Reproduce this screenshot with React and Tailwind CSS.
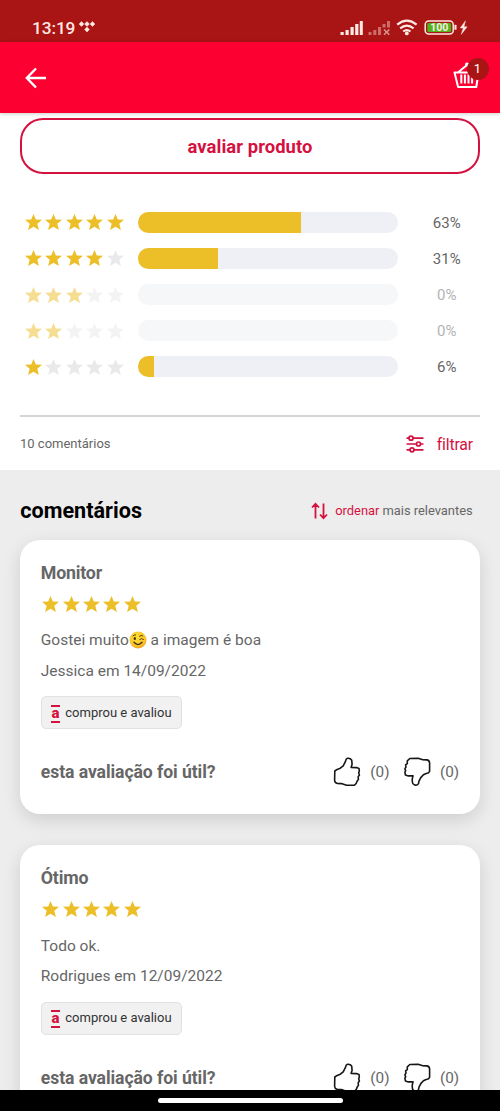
import React from "react";

const STAR = "M8.5 0 L10.8 5.5 L17 5.8 L12.3 9.8 L13.9 16 L8.5 12.7 L3.1 16 L4.7 9.8 L0 5.8 L6.2 5.5 Z";

function Stars({ count }) {
  return (
    <div className="flex gap-[3.4px]">
      {[0, 1, 2, 3, 4].map((i) => (
        <svg key={i} width="17" height="16" viewBox="0 0 17 16" className="block shrink-0">
          <path d={STAR} fill={i < count ? "#ecbe27" : "#e9e9eb"} />
        </svg>
      ))}
    </div>
  );
}

function RatingRow({ stars, percent }) {
  return (
    <div className={percent === 0 ? "flex h-[36.1px] items-center opacity-50" : "flex h-[36.1px] items-center"}>
      <div className="w-[113px] shrink-0">
        <Stars count={stars} />
      </div>
      <div className="h-[20.5px] w-[259.5px] shrink-0 overflow-hidden rounded-full bg-[#eff0f5]">
        <div className="h-full bg-[#ecbe27]" style={{ width: `${percent}%` }} />
      </div>
      <div className="ml-4 w-[69px] pt-[2px] text-center text-[15px] text-[#666]">{percent}%</div>
    </div>
  );
}

function Wink() {
  return (
    <svg width="18" height="18" viewBox="0 0 18 18" className="inline-block align-[-4px]">
      <defs>
        <radialGradient id="face" cx=".45" cy=".35" r=".65">
          <stop offset="0" stopColor="#fde030" />
          <stop offset=".75" stopColor="#f9c52c" />
          <stop offset="1" stopColor="#eda01f" />
        </radialGradient>
      </defs>
      <circle cx="9" cy="9" r="8.5" fill="url(#face)" />
      <ellipse cx="5.8" cy="7.6" rx="1.1" ry="1.5" fill="#422b0d" />
      <path d="M10.7 8.4 Q12.5 6.6 14.5 8.4 M10.5 5.2 Q12.3 3.8 13.8 4.8 M4 4.8 Q5 3.6 6.6 3.9" fill="none" stroke="#5a3a10" strokeWidth="1" strokeLinecap="round" />
      <path d="M5 11.3 Q9 15.8 13 11.3" fill="none" stroke="#422b0d" strokeWidth="1.3" strokeLinecap="round" />
    </svg>
  );
}

const THUMB_STROKE = {
  fill: "none",
  stroke: "#161616",
  strokeWidth: 1.6,
  strokeLinejoin: "round",
  strokeLinecap: "round",
};

function ThumbUp() {
  return (
    <svg width="28" height="30" viewBox="0 0 28 30" className="block shrink-0">
      <path
        {...THUMB_STROKE}
        d="M1.8 14 L1.6 23.2 Q1.8 26 4.4 26.4 L8.4 26.6 L13.5 28.3 L21.5 28.1 Q23.6 26.8 24.1 24.2 L25.4 22.4 L25.2 19.5 L26.4 18.2 L25.7 15.6 L26.3 14.2 L26 11.4 L23.5 10.6 L18.1 10.4 L19.1 7.3 L18.7 3.2 Q17.5 1 14.5 1.3 Q12.7 1.8 12.6 4.2 L10.2 8.8 L7.3 11.2 L4.2 12.4 Z"
      />
    </svg>
  );
}

function ThumbDown() {
  return (
    <svg width="28" height="30" viewBox="0 0 28 30" className="block shrink-0">
      <path
        {...THUMB_STROKE}
        d="M3.3 3.8 L5.8 1.5 L14 1.2 L18.2 2.6 L22.8 2.9 Q25.2 3.2 25.6 5.7 L25.6 14.2 Q25 16.2 22.2 16.5 L19.4 17.8 L16.8 20.6 L15 24.2 L14.5 26.6 Q13.2 28.6 10.7 28 Q8.5 27.2 8.4 25.2 L8.2 22.4 L9 18.9 L4.4 18.9 L1.4 17.9 L0.9 15.2 L1.7 13.7 L0.9 11.9 L2 9.8 L1.6 7.8 L3.3 6.5 Z"
      />
    </svg>
  );
}

function Review({ title, children, author }) {
  return (
    <article className="h-[274.5px] shrink-0 rounded-[20px] bg-white px-[20.5px] pt-[22px] text-[#666] shadow-[0_6px_18px_rgba(0,0,0,0.13)]">
      <h3 className="h-[22px] text-[17.8px] leading-[22px] font-bold tracking-[-0.2px]">{title}</h3>
      <div className="mt-[12px] ml-[1.5px]">
        <Stars count={5} />
      </div>
      <p className="mt-[18.5px] h-[20px] text-[15.5px] leading-[20px] whitespace-nowrap">{children}</p>
      <p className="mt-[10.5px] h-[20px] text-[15.5px] leading-[20px] whitespace-nowrap">{author}</p>
      <div className="mt-[15.5px] flex h-[33px] w-[141.5px] items-center rounded-[5px] border border-[#e1e1e3] bg-[#f1f1f2] pl-[9px] whitespace-nowrap">
        <div className="flex h-[16px] w-[9.5px] shrink-0 flex-col items-center justify-between text-[#d5113f]">
          <span className="h-[2px] w-full shrink-0 bg-[#d5113f]" />
          <span className="pb-[2px] text-[15px] leading-[12px] font-black">a</span>
          <span className="h-[2px] w-full shrink-0 bg-[#d5113f]" />
        </div>
        <span className="ml-[5px] text-[13px] text-[#333]">comprou e avaliou</span>
      </div>
      <div className="mt-[27.5px] flex h-[31px] items-center">
        <span className="w-[292.5px] shrink-0 pt-px text-[17.6px] font-bold tracking-[-0.08px] whitespace-nowrap">esta avaliação foi útil?</span>
        <ThumbUp />
        <span className="ml-[9px] w-[33.5px] pt-px text-[15.3px]">(0)</span>
        <ThumbDown />
        <span className="ml-[8.5px] pt-px text-[15.3px]">(0)</span>
      </div>
    </article>
  );
}

function StatusBar() {
  return (
    <div className="flex h-[42px] shrink-0 items-center bg-[#a91414] pt-[13px] pl-[32px] text-[#ffe9e3]">
      <span className="w-[47px] text-[17.3px] leading-[20px] font-medium tracking-[-0.1px]">13:19</span>
      <svg width="16" height="12" viewBox="0 0 16 12" fill="#ffe9e3" className="mb-[1px]">
        <path d="M2.5 .5 5 3 2.5 5.5 0 3Z M8 .5 10.5 3 8 5.5 5.5 3Z M13.5 .5 16 3 13.5 5.5 11 3Z M8 6 10.5 8.5 8 11 5.5 8.5Z" stroke="#ffe9e3" strokeWidth=".4" strokeLinejoin="round" />
      </svg>
      <svg width="128" height="18" viewBox="340 19 128 18" className="ml-[245px]" fill="#ffe9e3">
        <path d="M340.5 32h3.2v3h-3.2z M345.5 30h3.2v5h-3.2z M350.5 27h3.2v8h-3.2z M355.2 24h3.2v11h-3.2z M359.8 21h3v14h-3z" />
        <path opacity=".42" d="M368.5 32h3v3h-3z M373.3 30h3v5h-3z M378 27h3v8h-3z M382.5 24h3v3.5h-3z M387 21h3v6.5h-3z" />
        <path d="M384 29.5l5.3 5.3M389.3 29.5l-5.3 5.3" stroke="#ffe9e3" opacity=".6" strokeWidth="1.5" />
        <path d="M397.2 24.7 Q406.8 16.7 416.6 24.7 M400.2 28.4 Q406.8 22.7 413.6 28.4 M403.2 31.5 Q406.8 28.6 410.5 31.5" fill="none" stroke="#ffe9e3" strokeWidth="2.2" />
        <circle cx="406.8" cy="33.4" r="1.9" />
        <rect x="425.2" y="21" width="28" height="13" rx="3.5" fill="none" stroke="#ffe9e3" strokeWidth="1.5" />
        <rect x="427.3" y="23.1" width="23.8" height="8.8" rx="1.5" fill="#50b51d" />
        <path d="M454.6 25h1.7v4.5h-1.7z M465.5 20.7 460.2 28h3l-2 6.5 6-7.7h-3.2z" stroke="#ffe9e3" strokeWidth=".4" />
        <text x="439.3" y="31.4" fontSize="10.5" fontWeight="700" textAnchor="middle">100</text>
      </svg>
    </div>
  );
}

function Header() {
  return (
    <header className="z-10 flex h-[71px] shrink-0 items-center justify-between bg-[#fb0030] pr-[10.5px] pl-[25px] shadow-[0_1px_4px_rgba(0,0,0,0.2)]">
      <svg width="22" height="22" viewBox="0 0 22 22" fill="none" stroke="white" strokeWidth="2.4">
        <path d="M21 11H2 M11 1.5 1.8 11 11 20.5" />
      </svg>
      <div className="relative h-[36px] w-[37px]">
        <svg width="37" height="36" viewBox="452.5 59.5 37 36" fill="none" stroke="white" strokeWidth="2" className="block">
          <path d="M454 72H478L475.8 86.5H457.6Z M458 71.5 466.5 64.5 M460.8 74v9 M464.4 74v9 M468 74v9 M471.6 74v9" strokeLinejoin="round" />
          <circle cx="466.6" cy="64" r="1.1" fill="white" />
        </svg>
        <span className="absolute top-[-2px] left-[14.5px] flex h-[22px] w-[22px] items-center justify-center rounded-full bg-[#a91414] pr-px text-[13px] text-white">1</span>
      </div>
    </header>
  );
}

export default function App() {
  return (
    <div className="flex h-[1111px] w-[500px] flex-col overflow-hidden bg-[#ededed] font-[Roboto,sans-serif]">
      <StatusBar />
      <Header />
      <section className="flex h-[357px] shrink-0 flex-col bg-white px-[20px] pt-[5px]">
        <button className="h-[56px] shrink-0 rounded-[23px] border-[2.5px] border-[#d5113f] pt-px text-[18.4px] font-bold tracking-[0.08px] text-[#d5113f]">avaliar produto</button>
        <div className="mt-[30.3px] pl-[5px]">
          <RatingRow stars={5} percent={63} />
          <RatingRow stars={4} percent={31} />
          <RatingRow stars={3} percent={0} />
          <RatingRow stars={2} percent={0} />
          <RatingRow stars={1} percent={6} />
        </div>
        <hr className="mt-[30px] border-t-2 border-[#d5d5d7]" />
        <div className="flex h-[54px] items-center justify-between pr-[7px]">
          <span className="pt-px text-[13px] text-[#666]">10 comentários</span>
          <div className="flex items-center text-[15.8px] tracking-[-0.15px] text-[#d5113f]">
            <svg width="18" height="18" viewBox="0 0 18 18" fill="none" stroke="#d5113f" strokeWidth="1.7" className="mt-px mr-[13px]">
              <path d="M.5 3.2H3M7 3.2h10.5M.5 9H10.5M14.5 9h3M.5 14.8H4M8 14.8h9.5" />
              <circle cx="5" cy="3.2" r="2" />
              <circle cx="12.5" cy="9" r="2" />
              <circle cx="6" cy="14.8" r="2" />
            </svg>
            <span className="pt-[2px]">filtrar</span>
          </div>
        </div>
      </section>
      <main className="flex min-h-0 flex-1 flex-col overflow-hidden px-[20.3px]">
        <div className="flex h-[69.5px] shrink-0 items-center justify-between pt-[12px] pr-[7px]">
          <h2 className="pt-px text-[21.6px] font-bold text-black">comentários</h2>
          <div className="flex items-center text-[12.9px] text-[#666]">
            <svg width="17" height="18" viewBox="0 0 17 18" fill="none" stroke="#d5113f" strokeWidth="1.8" className="mr-[7px]">
              <path d="M4.5 16.5V2M1 5.5 4.5 1.8 8 5.5 M12.5 1.5V16M9 12.5l3.5 3.7 3.5-3.7" />
            </svg>
            <span className="mr-[3px] text-[#d5113f]">ordenar</span>
            <span>mais relevantes</span>
          </div>
        </div>
        <div className="flex flex-col gap-[31px]">
          <Review title="Monitor" author="Jessica em 14/09/2022">
            Gostei muito
            <Wink /> a imagem é boa
          </Review>
          <Review title="Ótimo" author="Rodrigues em 12/09/2022">Todo ok.</Review>
        </div>
      </main>
      <footer className="z-10 flex h-[21px] shrink-0 justify-center bg-black pt-[8px]">
        <div className="h-[5px] w-[185px] rounded-full bg-white" />
      </footer>
    </div>
  );
}
